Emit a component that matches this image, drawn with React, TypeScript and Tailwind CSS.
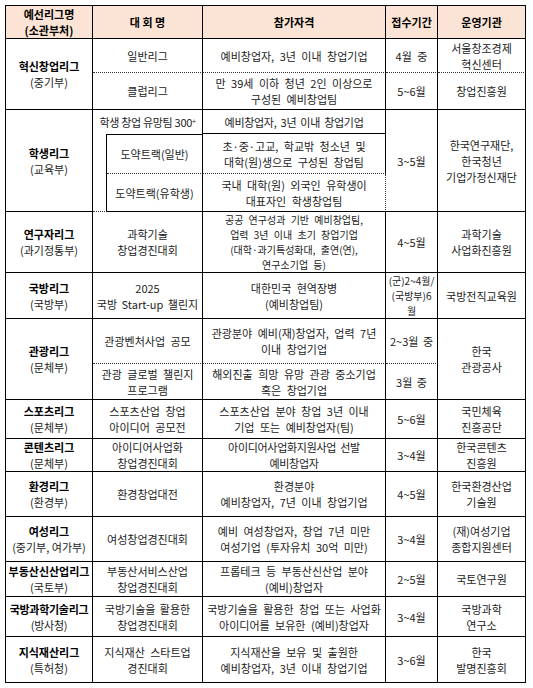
import type { ReactNode } from "react";
import { clsx } from "clsx";
import { twMerge } from "tailwind-merge";

const cn = (...args: Parameters<typeof clsx>) => twMerge(clsx(args));

const DOT = "[border-bottom-style:dotted] border-b-[#333]";
// 참가자격 column: spaces look wider in the source document
const Q = "[word-spacing:3px]";
// cells with 3-4 lines in a short row
const TIGHT = "text-[10px] leading-[15px]";

interface TdProps {
  children?: ReactNode;
  className?: string;
  rowSpan?: number;
  colSpan?: number;
}

function Td({ children, className, rowSpan, colSpan }: TdProps) {
  return (
    <td
      rowSpan={rowSpan}
      colSpan={colSpan}
      className={cn(
        "p-0 px-[2px] text-center align-middle whitespace-nowrap border-r border-b border-black",
        className
      )}
    >
      {children}
    </td>
  );
}

function League({
  name,
  ministry,
  rowSpan,
  className
}: {
  name: string;
  ministry: string;
  rowSpan?: number;
  className?: string;
}) {
  return (
    <Td rowSpan={rowSpan} className={className}>
      <div className="font-bold text-black">{name}</div>
      <div>{ministry}</div>
    </Td>
  );
}

export default function App() {
  return (
    <div className="min-h-[688px] bg-white pt-[5px] pl-[5px] font-['Noto_Sans_CJK_KR','Noto_Sans',sans-serif]">
      <table className="w-[521px] table-fixed border-separate border-spacing-0 border-t border-l border-black text-[11px] leading-[16px] text-[#222]">
        <colgroup>
          <col className="w-[87px]" />
          <col className="w-[14px]" />
          <col className="w-[96px]" />
          <col className="w-[183px]" />
          <col className="w-[52px]" />
          <col className="w-[88px]" />
        </colgroup>
        <tbody>
          <tr className="h-[32px] bg-[#fbe4d5] font-bold text-black">
            <Td>
              예선리그명
              <br />
              (소관부처)
            </Td>
            <Td colSpan={2}>대 회 명</Td>
            <Td>참가자격</Td>
            <Td>접수기간</Td>
            <Td>운영기관</Td>
          </tr>

          {/* 혁신창업리그 */}
          <tr className="h-[34px]">
            <League name="혁신창업리그" ministry="(중기부)" rowSpan={2} />
            <Td colSpan={2} className={DOT}>
              일반리그
            </Td>
            <Td className={cn(DOT, Q)}>예비창업자, 3년 이내 창업기업</Td>
            <Td className={cn(DOT, Q)}>4월 중</Td>
            <Td className={DOT}>
              서울창조경제
              <br />
              혁신센터
            </Td>
          </tr>
          <tr className="h-[37px]">
            <Td colSpan={2}>클럽리그</Td>
            <Td className={Q}>
              만 39세 이하 청년 2인 이상으로
              <br />
              구성된 예비창업팀
            </Td>
            <Td>5~6월</Td>
            <Td>창업진흥원</Td>
          </tr>

          {/* 학생리그 */}
          <tr className="h-[24px]">
            <League name="학생리그" ministry="(교육부)" rowSpan={3} />
            <Td colSpan={2} className="border-b-0 tracking-[-0.3px]">
              학생 창업 유망팀 300<sup className="text-[7px]">+</sup>
            </Td>
            <Td className="tracking-[-0.3px] [word-spacing:2px]">예비창업자, 3년 이내 창업기업</Td>
            <Td rowSpan={3}>3~5월</Td>
            <Td rowSpan={3}>
              한국연구재단,
              <br />
              한국청년
              <br />
              기업가정신재단
            </Td>
          </tr>
          <tr className="h-[40px]">
            <Td rowSpan={2} className={DOT} />
            <Td className={cn("border-t", DOT)}>도약트랙(일반)</Td>
            <Td className={cn(DOT, Q)}>
              초·중·고교, 학교밖 청소년 및
              <br />
              대학(원)생으로 구성된 창업팀
            </Td>
          </tr>
          <tr className="h-[38px]">
            <Td>도약트랙(유학생)</Td>
            <Td className={cn("[border-right-style:dotted] border-r-[#333]", Q)}>
              국내 대학(원) 외국인 유학생이
              <br />
              대표자인 학생창업팀
            </Td>
          </tr>

          {/* 연구자리그 */}
          <tr className="h-[61px]">
            <League name="연구자리그" ministry="(과기정통부)" />
            <Td colSpan={2}>
              과학기술
              <br />
              창업경진대회
            </Td>
            <Td className={cn(TIGHT, Q)}>
              공공 연구성과 기반 예비창업팀,
              <br />
              업력 3년 이내 초기 창업기업
              <br />
              (대학·과기특성화대, 출연(연),
              <br />
              연구소기업 등)
            </Td>
            <Td>4~5월</Td>
            <Td>
              과학기술
              <br />
              사업화진흥원
            </Td>
          </tr>

          {/* 국방리그 */}
          <tr className="h-[45px]">
            <League name="국방리그" ministry="(국방부)" />
            <Td colSpan={2} className="[word-spacing:2px]">
              2025
              <br />
              국방 Start-up 챌린지
            </Td>
            <Td className={Q}>
              대한민국 현역장병
              <br />
              (예비창업팀)
            </Td>
            <Td className={cn(TIGHT, "px-0")}>
              (군)2~4월/
              <br />
              (국방부)6
              <br />월
            </Td>
            <Td>국방전직교육원</Td>
          </tr>

          {/* 관광리그 */}
          <tr className="h-[45px]">
            <League name="관광리그" ministry="(문체부)" rowSpan={2} />
            <Td colSpan={2} className={cn(DOT, "[word-spacing:3px]")}>
              관광벤처사업 공모
            </Td>
            <Td className={cn(DOT, Q)}>
              관광분야 예비(재)창업자, 업력 7년
              <br />
              이내 창업기업
            </Td>
            <Td className={cn(DOT, "[word-spacing:2px]")}>2~3월 중</Td>
            <Td rowSpan={2}>
              한국
              <br />
              관광공사
            </Td>
          </tr>
          <tr className="h-[36px]">
            <Td colSpan={2} className="[word-spacing:3px]">
              관광 글로벌 챌린지
              <br />
              프로그램
            </Td>
            <Td className={Q}>
              해외진출 희망 유망 관광 중소기업
              <br />
              혹은 창업기업
            </Td>
            <Td className="[word-spacing:2px]">3월 중</Td>
          </tr>

          {/* 스포츠리그 */}
          <tr className="h-[39px]">
            <League name="스포츠리그" ministry="(문체부)" />
            <Td colSpan={2} className="[word-spacing:3px]">
              스포츠산업 창업
              <br />
              아이디어 공모전
            </Td>
            <Td className={Q}>
              스포츠산업 분야 창업 3년 이내
              <br />
              기업 또는 예비창업자(팀)
            </Td>
            <Td>5~6월</Td>
            <Td>
              국민체육
              <br />
              진흥공단
            </Td>
          </tr>

          {/* 콘텐츠리그 */}
          <tr className="h-[33px]">
            <League name="콘텐츠리그" ministry="(문체부)" />
            <Td colSpan={2}>
              아이디어사업화
              <br />
              창업경진대회
            </Td>
            <Td className="tracking-[-0.3px] [word-spacing:2px]">
              아이디어사업화지원사업 선발
              <br />
              예비창업자
            </Td>
            <Td>3~4월</Td>
            <Td>
              한국콘텐츠
              <br />
              진흥원
            </Td>
          </tr>

          {/* 환경리그 */}
          <tr className="h-[45px]">
            <League name="환경리그" ministry="(환경부)" />
            <Td colSpan={2}>환경창업대전</Td>
            <Td className={Q}>
              환경분야
              <br />
              예비창업자, 7년 이내 창업기업
            </Td>
            <Td>4~5월</Td>
            <Td>
              한국환경산업
              <br />
              기술원
            </Td>
          </tr>

          {/* 여성리그 */}
          <tr className="h-[45px]">
            <League name="여성리그" ministry="(중기부, 여가부)" />
            <Td colSpan={2}>여성창업경진대회</Td>
            <Td className={Q}>
              예비 여성창업자, 창업 7년 미만
              <br />
              여성기업 (투자유치 30억 미만)
            </Td>
            <Td>3~4월</Td>
            <Td>
              (재)여성기업
              <br />
              종합지원센터
            </Td>
          </tr>

          {/* 부동산신산업리그 */}
          <tr className="h-[35px]">
            <League name="부동산신산업리그" ministry="(국토부)" />
            <Td colSpan={2}>
              부동산서비스산업
              <br />
              창업경진대회
            </Td>
            <Td className={Q}>
              프롭테크 등 부동산신산업 분야
              <br />
              (예비)창업자
            </Td>
            <Td>2~5월</Td>
            <Td>국토연구원</Td>
          </tr>

          {/* 국방과학기술리그 */}
          <tr className="h-[40px]">
            <League
              name="국방과학기술리그"
              ministry="(방사청)"
              className="px-0 tracking-[-0.3px]"
            />
            <Td colSpan={2} className="[word-spacing:2px]">
              국방기술을 활용한
              <br />
              창업경진대회
            </Td>
            <Td className="px-0 [word-spacing:3px]">
              국방기술을 활용한 창업 또는 사업화
              <br />
              아이디어를 보유한 (예비)창업자
            </Td>
            <Td>3~4월</Td>
            <Td>
              국방과학
              <br />
              연구소
            </Td>
          </tr>

          {/* 지식재산리그 */}
          <tr className="h-[46px]">
            <League name="지식재산리그" ministry="(특허청)" />
            <Td colSpan={2} className="[word-spacing:3px]">
              지식재산 스타트업
              <br />
              경진대회
            </Td>
            <Td className={Q}>
              지식재산을 보유 및 출원한
              <br />
              예비창업자, 3년 이내 창업기업
            </Td>
            <Td>3~6월</Td>
            <Td>
              한국
              <br />
              발명진흥회
            </Td>
          </tr>
        </tbody>
      </table>
    </div>
  );
}
